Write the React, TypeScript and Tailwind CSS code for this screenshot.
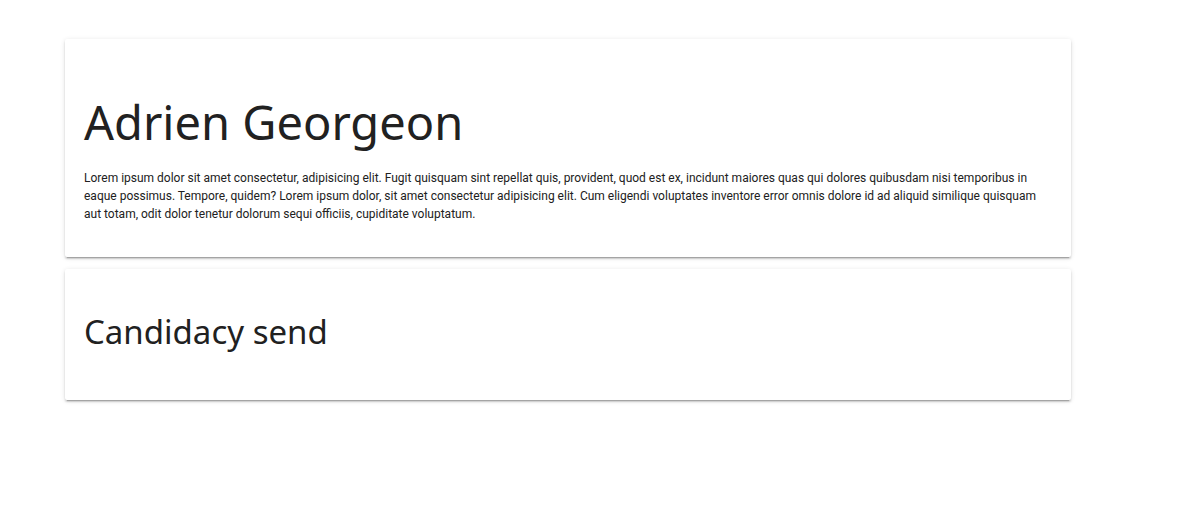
export default function App() {
  return (
    <main className="flex min-h-screen flex-col gap-3 bg-white pt-[39px] pr-[106px] pb-10 pl-[65px] font-['Noto_Sans',sans-serif] text-[#212121]">
      <section className="rounded-[2px] bg-white px-[19px] pt-12 pb-[34px] shadow-[0_3px_1px_-2px_rgba(0,0,0,0.2),0_2px_2px_0_rgba(0,0,0,0.14),0_1px_5px_0_rgba(0,0,0,0.12)]">
        <h1 className="text-[47px] leading-[70px] font-normal">Adrien Georgeon</h1>
        <p className="mt-3 font-['Roboto',sans-serif] text-[12px] leading-[18px]">
          Lorem ipsum dolor sit amet consectetur, adipisicing elit. Fugit quisquam sint repellat quis, provident, quod est ex, incidunt maiores quas qui dolores quibusdam nisi temporibus in eaque possimus. Tempore, quidem? Lorem ipsum dolor, sit amet consectetur adipisicing elit. Cum eligendi voluptates inventore error omnis dolore id ad aliquid similique quisquam aut totam, odit dolor tenetur dolorum sequi officiis, cupiditate voluptatum.
        </p>
      </section>
      <section className="rounded-[2px] bg-white px-[19px] pt-9 pb-[41px] shadow-[0_3px_1px_-2px_rgba(0,0,0,0.2),0_2px_2px_0_rgba(0,0,0,0.14),0_1px_5px_0_rgba(0,0,0,0.12)]">
        <h2 className="text-[33px] leading-[54px] font-normal">Candidacy send</h2>
      </section>
    </main>
  );
}
